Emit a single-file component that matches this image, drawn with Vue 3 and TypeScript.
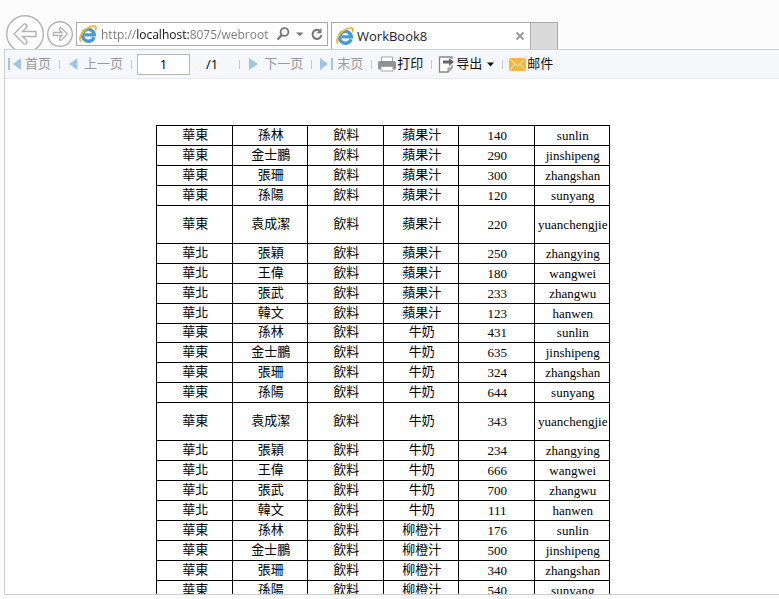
<script setup lang="ts">
import { ref } from 'vue'

interface Row {
  area: string
  name: string
  kind: string
  product: string
  amount: number
  account: string
}

const address = ref('http://localhost:8075/webroot')
const page = ref('1')

const people: [string, string, string][] = [
  ['華東', '孫林', 'sunlin'],
  ['華東', '金士鵬', 'jinshipeng'],
  ['華東', '張珊', 'zhangshan'],
  ['華東', '孫陽', 'sunyang'],
  ['華東', '袁成潔', 'yuanchengjie'],
  ['華北', '張穎', 'zhangying'],
  ['華北', '王偉', 'wangwei'],
  ['華北', '張武', 'zhangwu'],
  ['華北', '韓文', 'hanwen'],
]

const sales: { product: string; amounts: number[] }[] = [
  { product: '蘋果汁', amounts: [140, 290, 300, 120, 220, 250, 180, 233, 123] },
  { product: '牛奶', amounts: [431, 635, 324, 644, 343, 234, 666, 700, 111] },
  { product: '柳橙汁', amounts: [176, 500, 340, 540] },
]

const rows: Row[] = sales.flatMap(({ product, amounts }) =>
  amounts.map((amount, i) => ({
    area: people[i][0],
    name: people[i][1],
    kind: '飲料',
    product,
    amount,
    account: people[i][2],
  })),
)
</script>

<template>
  <div class="browser">
    <header class="chrome">
      <button class="nav back" type="button" aria-label="Back">
        <svg width="38" height="38" viewBox="0 0 38 38">
          <circle cx="19" cy="19" r="18.3" />
          <path d="M8 19 17.5 9.5Q19 8.300 20.500 9.500 21.500 11 20.500 12.500L16.500 16.500H30V21.500H16.500L20.500 25.500Q21.500 27 20.500 28.500 19 29.700 17.500 28.500Z" />
        </svg>
      </button>
      <button class="nav" type="button" aria-label="Forward">
        <svg width="26" height="26" viewBox="0 0 26 26">
          <circle cx="13" cy="13" r="12.3" />
          <path d="M20.500 13 14.500 7Q13 6.500 12.500 8 12.300 9 13 9.500L15 11.500H6.500V14.500H15L13 16.500Q12.300 17.500 12.500 18.500 13.500 19.500 14.500 19Z" />
        </svg>
      </button>
      <div class="address">
        <svg width="18" height="18" viewBox="0 0 18 18">
          <path d="M15 12.200A5.900 5.900 0 1 1 15.300 9.900H5.500" fill="none" stroke="#4a9ad0" stroke-width="3.400" />
          <path d="M2.500 16.500C-1 15 2 7 8 3.500 12 .8 16.500 0 17 2.500 17.100 3.500 16.800 4.500 16.300 5.500" fill="none" stroke="#f0b63c" stroke-width="1.800" />
        </svg>
        <input v-model="address" class="url" aria-label="Address" />
        <button class="tool" type="button" aria-label="Search">
          <svg width="14" height="14" viewBox="0 0 14 14">
            <circle cx="8.500" cy="5" r="3.900" fill="none" stroke="#777" stroke-width="1.800" />
            <path d="M5.800 8 1.500 12.500" stroke="#777" stroke-width="2.400" />
          </svg>
        </button>
        <button class="tool" type="button" aria-label="Show addresses">
          <svg width="8" height="14" viewBox="0 0 8 14"><path d="M0 5.500h7.500L3.750 9.300z" fill="#777" /></svg>
        </button>
        <button class="tool" type="button" aria-label="Refresh">
          <svg width="14" height="14" viewBox="0 0 14 14">
            <path d="M9.500 3.600A4.500 4.500 0 1 0 11.500 8" fill="none" stroke="#777" stroke-width="2" />
            <path d="M11.500 1v5.200H6.500z" fill="#777" />
          </svg>
        </button>
      </div>
      <div class="tab">
        <svg width="18" height="18" viewBox="0 0 18 18">
          <path d="M15 12.200A5.900 5.900 0 1 1 15.300 9.900H5.500" fill="none" stroke="#4a9ad0" stroke-width="3.400" />
          <path d="M2.500 16.500C-1 15 2 7 8 3.500 12 .8 16.500 0 17 2.500 17.100 3.500 16.800 4.500 16.300 5.500" fill="none" stroke="#f0b63c" stroke-width="1.800" />
        </svg>
        <span class="title">WorkBook8</span>
        <button class="tool" type="button" aria-label="Close tab">
          <svg width="10" height="10" viewBox="0 0 10 10"><path d="M1.500 1.500l7 7M8.500 1.500l-7 7" stroke="#999" stroke-width="2" /></svg>
        </button>
      </div>
      <button class="newtab" type="button" aria-label="New tab"></button>
    </header>

    <main class="viewer">
      <nav class="toolbar">
        <button class="cmd edge" type="button" disabled>
          <svg width="14" height="14" viewBox="0 0 14 14"><path d="M0 1h2v12H0zM13 1v12L5 7z" fill="#9dc6e8" /></svg>
          <span>首页</span>
        </button>
        <i class="sep"></i>
        <button class="cmd step" type="button" disabled>
          <svg width="10" height="14" viewBox="0 0 10 14"><path d="M9.500 1v12L1 7z" fill="#9dc6e8" /></svg>
          <span>上一页</span>
        </button>
        <i class="sep"></i>
        <input v-model="page" class="page" aria-label="Page" />
        <span class="total">/1</span>
        <i class="sep"></i>
        <button class="cmd step" type="button" disabled>
          <svg width="10" height="14" viewBox="0 0 10 14"><path d="M1 1v12l9-6z" fill="#9dc6e8" /></svg>
          <span>下一页</span>
        </button>
        <i class="sep"></i>
        <button class="cmd edge" type="button" disabled>
          <svg width="14" height="14" viewBox="0 0 14 14"><path d="M0 1v12l8-6zM11 1h2v12h-2z" fill="#9dc6e8" /></svg>
          <span>末页</span>
        </button>
        <i class="sep"></i>
        <button class="cmd action" type="button">
          <svg width="18" height="16" viewBox="0 0 18 16">
            <path d="M3.500 1h11v5h-11z" fill="#fff" stroke="#a5a5a5" />
            <path d="M2 5h14q2 0 2 2v5q0 1.500-1.500 1.500h-15Q0 13.500 0 12V7q0-2 2-2z" fill="#8f9193" />
            <path d="M3 10.500h12v4.500H3z" fill="#fff" stroke="#a5a5a5" />
          </svg>
          <span>打印</span>
        </button>
        <i class="sep"></i>
        <button class="cmd action" type="button">
          <svg width="17" height="17" viewBox="0 0 17 17">
            <path d="M14 3V1H1.500v15H10l4-4V9" fill="#fff" stroke="#888" stroke-width="1.300" />
            <path d="M10 16v-4h4" fill="#bbb" stroke="#888" />
            <path d="M5 4.500h6V2l5 4-5 4V7.500H5z" fill="#666" />
          </svg>
          <span>导出</span>
          <svg class="caret" width="7" height="5" viewBox="0 0 7 5"><path d="M0 .5h7L3.500 4.500z" fill="#111" /></svg>
        </button>
        <i class="sep"></i>
        <button class="cmd action" type="button">
          <svg width="17" height="13" viewBox="0 0 17 13">
            <path d="M0 0h17v13H0z" fill="#efb744" />
            <path d="M.5.500 8.500 8l8-7.500M.5 12.500l5.500-6.500M16.500 12.500l-5.500-6.500" fill="none" stroke="#fff1cf" />
          </svg>
          <span>邮件</span>
        </button>
      </nav>
      <section class="report">
        <table>
          <tbody>
            <tr
              v-for="(row, i) in rows"
              :key="i"
              :class="{ tall: row.account === 'yuanchengjie', short: i === people.length }"
            >
              <td>{{ row.area }}</td>
              <td>{{ row.name }}</td>
              <td>{{ row.kind }}</td>
              <td>{{ row.product }}</td>
              <td class="latin">{{ row.amount }}</td>
              <td class="latin">{{ row.account }}</td>
            </tr>
          </tbody>
        </table>
      </section>
    </main>
  </div>
</template>

<style>
body {
  background: #fbfbfb;
}
</style>

<style scoped>
.browser {
  box-sizing: border-box;
  display: flex;
  flex-direction: column;
  height: 100vh;
  padding: 0 0 4px 4px;
  overflow: hidden;
  background: #fbfbfb;
  font-family: "Open Sans", "Noto Sans CJK SC", sans-serif;
}
button,
input {
  margin: 0;
  padding: 0;
  border: 0;
  background: none;
  font: inherit;
  color: inherit;
}
svg {
  display: block;
  flex: none;
}
.chrome {
  display: flex;
  flex: none;
  align-items: flex-start;
  height: 34px;
  padding: 15px 0 0 2px;
}
.nav {
  flex: none;
  margin-top: 6px;
}
.nav.back {
  margin: 0 3px 0 0;
}
.nav svg {
  fill: #fff;
  stroke: #b2b2b2;
  stroke-width: 1.4;
}
.address {
  box-sizing: border-box;
  display: flex;
  align-items: center;
  gap: 6px;
  width: 252px;
  height: 24px;
  margin: 7px 3px 0;
  padding: 0 3px 0 2px;
  border: 1px solid #aaa;
  background: #fff;
}
.url {
  flex: 1;
  min-width: 0;
  margin: 0 -2px;
  font-size: 12px;
  color: transparent;
  background: linear-gradient(90deg, #777 36px, #111 36px, #111 89px, #777 89px);
  -webkit-background-clip: text;
  background-clip: text;
}
.tab {
  box-sizing: border-box;
  display: flex;
  align-items: center;
  width: 200px;
  height: 27px;
  margin-top: 7px;
  padding: 0 5px 0 4px;
  border: 1px solid #aaa;
  border-bottom: 0;
  background: #fff;
}
.title {
  flex: 1;
  margin-left: 3px;
  font-size: 13px;
  color: #222;
}
.newtab {
  box-sizing: border-box;
  width: 27px;
  height: 27px;
  margin-top: 7px;
  border: 1px solid #aaa;
  border-width: 1px 1px 0 0;
  background: #dadada;
}
.viewer {
  position: relative;
  display: flex;
  flex: 1;
  flex-direction: column;
  min-height: 0;
  border: 1px solid #ccced0;
  border-right: 0;
  background: #fff;
}
.toolbar {
  display: flex;
  flex: none;
  align-items: center;
  height: 28px;
  padding-left: 3px;
  border-bottom: 1px solid #e8ebee;
  background: #f5f7fa;
  font-size: 13px;
  line-height: 20px;
}
.cmd {
  display: flex;
  align-items: center;
  color: #111;
  white-space: nowrap;
}
.cmd span {
  padding-bottom: 2px;
}
.cmd:disabled {
  color: #999;
}
.cmd.edge {
  gap: 3px;
}
.cmd.step {
  gap: 6px;
}
.cmd.action {
  gap: 1px;
  margin-left: -2px;
}
.caret {
  margin-left: 4px;
}
.sep {
  width: 1px;
  height: 9px;
  margin: 0 8px;
  background: #c8c8c8;
}
.page {
  box-sizing: border-box;
  width: 53px;
  height: 21px;
  margin-right: 16px;
  margin-left: -3px;
  border: 1px solid #b8b8b8;
  background: #fff;
  text-align: center;
}
.total {
  margin-right: 13px;
}
.report {
  flex: 1;
  min-height: 0;
  padding: 46px 0 0 151px;
  overflow: hidden;
}
table {
  width: 454px;
  border-collapse: collapse;
  table-layout: fixed;
  font: 13px/16px "Liberation Serif", "Noto Sans CJK TC", serif;
  color: #000;
}
tr {
  height: 20px;
}
tr.tall {
  height: 38px;
}
tr.short {
  height: 19px;
}
td {
  padding: 0 0 2px 2px;
  border: 1px solid #000;
  text-align: center;
}
td.latin {
  padding: 1px 0 1px 2px;
}
</style>
